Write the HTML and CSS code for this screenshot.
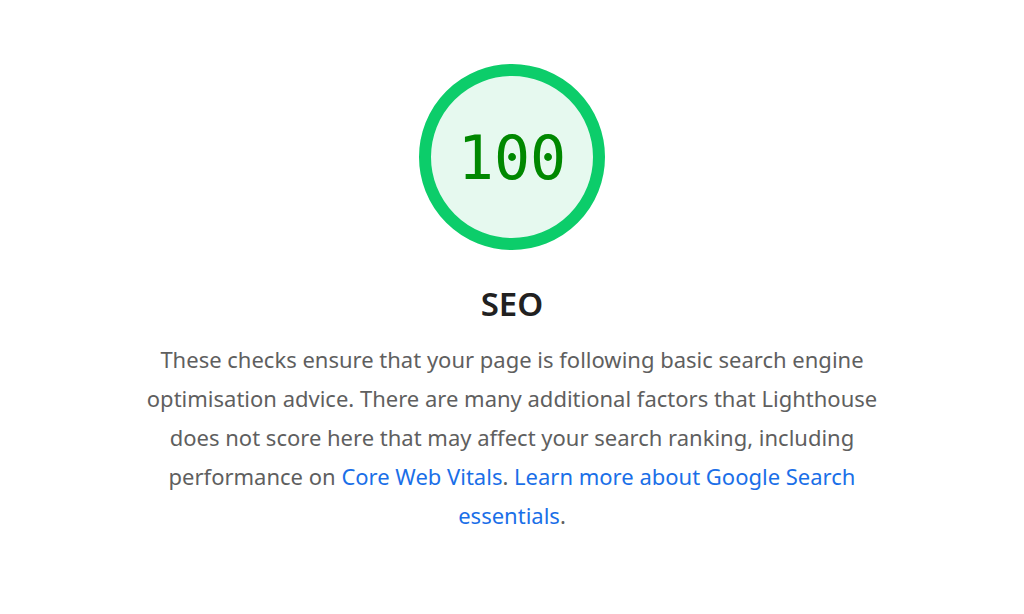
FILE: index.html
```html
<!DOCTYPE html>
<html lang="en">
<head>
  <meta charset="UTF-8">
  <meta name="viewport" content="width=device-width, initial-scale=1.0">
  <title>SEO</title>
  <link rel="stylesheet" href="styles.css">
</head>
<body>
<div class="category">
    <div class="gauge">
        <svg class="gauge-ring" viewBox="0 0 186 186" width="186" height="186">
            <circle cx="93" cy="93" r="87" class="gauge-arc"></circle>
        </svg>
        <div class="gauge-score">100</div>
    </div>
    <h1 class="category-title">SEO</h1>
    <p class="category-description">
        These checks ensure that your page is following basic search engine optimisation advice. There are many additional factors that Lighthouse does not score here that may affect your search ranking, including performance on <a href="#">Core Web Vitals</a>. <a href="#">Learn more about Google Search essentials</a>.
    </p>
</div>
</body>
</html>
```

FILE: styles.css
```css
body {
    margin: 0;
    padding: 0;
    background: #ffffff;
    font-family: 'Noto Sans', 'Open Sans', sans-serif;
}

.category {
    display: flex;
    flex-direction: column;
    align-items: center;
    padding-top: 64px;
}

.gauge {
    position: relative;
    width: 186px;
    height: 186px;
}

.gauge-ring {
    display: block;
}

.gauge-arc {
    fill: #e6f9ef;
    stroke: #0ccd6a;
    stroke-width: 12;
}

.gauge-score {
    position: absolute;
    inset: 0;
    display: flex;
    align-items: center;
    justify-content: center;
    padding-top: 2px;
    font-family: 'DejaVu Sans Mono', monospace;
    font-size: 60px;
    color: #008800;
}

.category-title {
    margin: 34px 0 0;
    font-size: 33px;
    font-weight: 600;
    line-height: 40px;
    color: #212121;
}

.category-description {
    margin: 16px 0 0;
    max-width: 760px;
    font-size: 22px;
    line-height: 39px;
    text-align: center;
    color: #5f5f5f;
}

.category-description a {
    color: #1a6fe8;
    text-decoration: none;
}
```
